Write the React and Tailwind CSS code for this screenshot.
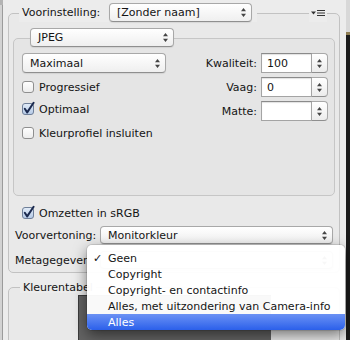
import React from "react";

function Arrows() {
  return (
    <svg width="5" height="9" viewBox="0 0 5 9" className="shrink-0">
      <path d="M2.5 0 L5 3.2 H0 Z M2.5 9 L5 5.8 H0 Z" fill="#454545" />
    </svg>
  );
}

function Select({ text, className = "" }) {
  return (
    <div
      className={
        "flex items-center justify-between rounded-[4px] border border-[#a8a8a8] border-b-[#8f8f8f] bg-gradient-to-b from-white to-[#efefef] shadow-[0_1px_1px_rgba(0,0,0,0.08)] pl-[7px] pr-[5px] " +
        className
      }
    >
      <span className="whitespace-nowrap">{text}</span>
      <Arrows />
    </div>
  );
}

function Box({ checked }) {
  return (
    <svg width="14" height="14" viewBox="0 0 14 14" className="shrink-0 overflow-visible">
      <defs>
        <linearGradient id="cbu" x1="0" y1="0" x2="0" y2="1">
          <stop offset="0" stopColor="#ffffff" />
          <stop offset="1" stopColor="#ececec" />
        </linearGradient>
        <linearGradient id="cbc" x1="0" y1="0" x2="0" y2="1">
          <stop offset="0" stopColor="#e2ecf8" />
          <stop offset="1" stopColor="#b4c9e6" />
        </linearGradient>
      </defs>
      <rect
        x="0.5"
        y="1.5"
        width="11"
        height="11"
        rx="2.5"
        fill={checked ? "url(#cbc)" : "url(#cbu)"}
        stroke={checked ? "#6f7f98" : "#8f8f8f"}
      />
      {checked && (
        <path
          d="M2.8 6.8 L5.2 10.4 L11.6 0.8"
          fill="none"
          stroke="#1b2a4f"
          strokeWidth="2"
          strokeLinecap="round"
          strokeLinejoin="round"
        />
      )}
    </svg>
  );
}

function Check({ label, checked, className = "" }) {
  return (
    <div className={"flex items-center h-[22px] " + className}>
      <Box checked={checked} />
      <span className="ml-[3px] whitespace-nowrap">{label}</span>
    </div>
  );
}

function Spin({ value }) {
  return (
    <div className="flex h-[20px]">
      <div className="w-[51px] bg-white border border-[#a4a4a4] border-t-[#8a8a8a] shadow-[inset_0_1px_1px_rgba(0,0,0,0.12)] flex items-center pl-[5px]">
        {value}
      </div>
      <div className="w-[16px] rounded-r-[4px] border border-l-0 border-[#a8a8a8] border-b-[#8f8f8f] bg-gradient-to-b from-white to-[#ececec] flex items-center justify-center">
        <Arrows />
      </div>
    </div>
  );
}

function MenuIcon() {
  return (
    <svg width="14" height="8" viewBox="0 0 14 8">
      <path d="M0 2.5 H5 L2.5 5.5 Z" fill="#333" />
      <path d="M6 1.5 H14 M6 4 H14 M6 6.5 H14" stroke="#333" strokeWidth="1" />
    </svg>
  );
}

const items = [
  "Geen",
  "Copyright",
  "Copyright- en contactinfo",
  "Alles, met uitzondering van Camera-info",
  "Alles",
];

export default function App() {
  return (
    <div className="relative w-[350px] h-[340px] flex overflow-hidden text-[11px] leading-none text-[#141414] [font-family:'DejaVu_Sans',sans-serif]">
      {/* left window edge */}
      <div className="w-[3px] shrink-0 flex flex-col">
        <div className="h-[5px] bg-[#b3b3b3]" />
        <div className="flex-1 bg-[#d2d2d2] border-r border-[#9b9b9b]" />
      </div>

      {/* panel */}
      <div className="w-[343px] shrink-0 bg-[#ececec] flex flex-col pl-[5px] pr-[6px] overflow-hidden">
        {/* outer group */}
        <div className="mt-[13px] h-[260px] shrink-0 border border-[#c2c2c2] rounded-[5px] bg-black/[0.012] flex flex-col">
          <div className="-mt-[11px] h-[19px] flex items-center">
            <div className="ml-[10px] pl-[3px] pr-[5px] h-full bg-[#ececec] flex items-center">
              <span className="w-[87px] whitespace-nowrap">Voorinstelling:</span>
              <Select className="w-[143px] h-[19px]" text="[Zonder naam]" />
            </div>
            <div className="flex-1" />
            <div className="mr-[12px] px-[2px] h-full bg-[#ececec] flex items-center">
              <MenuIcon />
            </div>
          </div>

          {/* inner group */}
          <div className="mt-[16px] mx-[4px] h-[158px] shrink-0 border border-[#c6c6c6] rounded-[5px] bg-black/[0.015] flex flex-col">
            <div className="-mt-[11px] ml-[16px] flex">
              <Select className="w-[144px] h-[19px]" text="JPEG" />
            </div>
            <div className="mt-[6px] pl-[8px] pr-[6px] flex justify-between">
              <div className="flex flex-col w-[144px]">
                <Select className="h-[20px]" text="Maximaal" />
                <Check className="mt-[3px]" label="Progressief" />
                <Check label="Optimaal" checked />
                <Check className="mt-[2px]" label="Kleurprofiel insluiten" />
              </div>
              <div className="grid grid-cols-[auto_auto] gap-x-[4px] gap-y-[4px] items-center self-start">
                <span className="justify-self-end">Kwaliteit:</span>
                <Spin value="100" />
                <span className="justify-self-end">Vaag:</span>
                <Spin value="0" />
                <span className="justify-self-end">Matte:</span>
                <Spin value="" />
              </div>
            </div>
          </div>

          <div className="mt-[6px] pl-[13px]">
            <Check className="h-[20px]" label="Omzetten in sRGB" checked />
          </div>
          <div className="mt-[2px] pl-[6px] pr-[6px] flex items-center h-[18px]">
            <span className="w-[85px] whitespace-nowrap">Voorvertoning:</span>
            <Select className="flex-1 h-[18px]" text="Monitorkleur" />
          </div>
          <div className="mt-[7px] pl-[6px] pr-[6px] flex items-center h-[18px]">
            <div className="w-[85px] shrink-0">
              <div className="w-[72px] overflow-hidden whitespace-nowrap">Metagegevens:</div>
            </div>
            <Select className="flex-1 h-[18px]" text="" />
          </div>
        </div>

        {/* Kleurentabel group */}
        <div className="mt-[14px] h-[70px] shrink-0 border border-[#c2c2c2] rounded-[5px] bg-black/[0.012] flex flex-col">
          <div className="-mt-[7px] h-[12px] flex">
            <span className="ml-[11px] px-[3px] bg-[#ececec] flex items-center whitespace-nowrap">Kleurentabel</span>
          </div>
          <div className="mt-[2px] ml-[69px] w-[193px] h-[50px] bg-[#636363] border-l border-t border-[#3c3c3c]" />
        </div>
      </div>

      {/* window behind, right */}
      <div className="w-[4px] shrink-0 flex flex-col">
        <div className="h-[32px] bg-[#d8d8d8]" />
        <div className="h-[3px] bg-[#8e7d52]" />
        <div className="flex-1 bg-[#1b1b1b]" />
      </div>

      {/* popup menu */}
      <div className="absolute left-[87px] top-[245px] w-[258px] h-[85px] rounded-[5px] bg-white/[0.96] shadow-[0_5px_14px_rgba(0,0,0,0.5),0_0_0_1px_rgba(0,0,0,0.1)] overflow-hidden pt-[5px] flex flex-col">
        {items.map((t, i) => (
          <div
            key={t}
            className={
              "h-[16px] shrink-0 flex items-center " +
              (i === 4 ? "bg-gradient-to-b from-[#6b91f4] to-[#2b5fea] text-white" : "")
            }
          >
            <span className="w-[21px] pl-[6px] shrink-0">{i === 0 ? "✓" : ""}</span>
            <span className="whitespace-nowrap">{t}</span>
          </div>
        ))}
      </div>
    </div>
  );
}
